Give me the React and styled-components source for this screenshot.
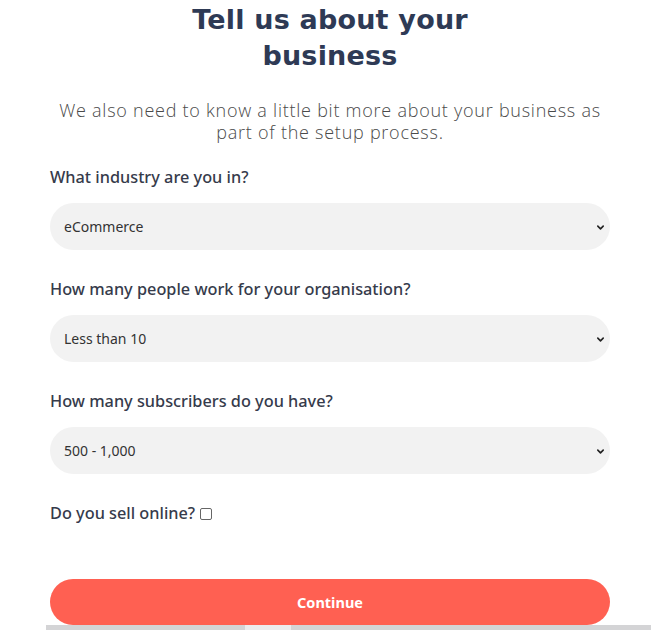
import React from 'react';
import styled, { createGlobalStyle } from 'styled-components';

const Global = createGlobalStyle`
  html, body { margin: 0; padding: 0; background: #fff; }
  body { font-family: "Noto Sans", "Open Sans", sans-serif; }
`;

const Page = styled.main`
  width: 651px;
  height: 630px;
  overflow: hidden;
  display: flex;
  flex-direction: column;
`;

const Form = styled.form`
  width: 560px;
  margin-left: 50px;
  display: flex;
  flex-direction: column;
`;

const Title = styled.h1`
  margin: 2px auto 0;
  width: 320px;
  text-align: center;
  font-family: "DejaVu Sans", sans-serif;
  font-weight: 700;
  font-size: 27px;
  line-height: 36px;
  letter-spacing: 0.2px;
  color: #2e3a55;
`;

const Lead = styled.p`
  margin: 25px -10px 0;
  text-align: center;
  font-family: "Open Sans", sans-serif;
  font-weight: 300;
  font-size: 18px;
  line-height: 22px;
  letter-spacing: 0.75px;
  color: #4a4a4a;
`;

const Field = styled.div`
  display: flex;
  flex-direction: column;
  margin-top: ${p => p.$top || 0}px;
`;

const Label = styled.label`
  font-size: 16.3px;
  font-weight: 500;
  color: #363b4b;
  line-height: 22px;
  display: flex;
  align-items: center;
  gap: 5px;
`;

const SelectWrap = styled.div`
  position: relative;
  margin-top: 15px;
`;

const Select = styled.select`
  appearance: none;
  width: 100%;
  height: 47px;
  border: none;
  border-radius: 24px;
  background: #f2f2f2;
  padding: 0 14px;
  font-family: "Noto Sans", sans-serif;
  font-size: 14px;
  color: #333;
  outline: none;
`;

const Caret = styled.svg`
  position: absolute;
  right: 5px;
  top: 50%;
  margin-top: -4px;
  width: 9px;
  height: 9px;
  pointer-events: none;
`;

const Box = styled.span`
  width: 12px;
  height: 12px;
  border: 1px solid #666;
  border-radius: 2px;
  background: #fff;
  box-sizing: border-box;
  margin-top: 1px;
`;

const Button = styled.button`
  margin-top: 55px;
  height: 46px;
  border: none;
  border-radius: 23px;
  background: #ff6052;
  color: #fff;
  font-family: "Noto Sans", sans-serif;
  font-weight: 700;
  font-size: 14.5px;
  cursor: pointer;
`;

const Scroll = styled.div`
  margin-top: auto;
  height: 5px;
  margin-left: 46px;
  background: #d4d4d6;
  display: flex;
  padding-left: 199px;
  & span { width: 46px; background: #ececee; }
`;

const fields = [
  { label: 'What industry are you in?', value: 'eCommerce', top: 23 },
  { label: 'How many people work for your organisation?', value: 'Less than 10', top: 28 },
  { label: 'How many subscribers do you have?', value: '500 - 1,000', top: 28 },
];

export default function App() {
  return (
    <Page>
      <Global />
      <Form onSubmit={e => e.preventDefault()}>
        <Title>Tell us about your business</Title>
        <Lead>We also need to know a little bit more about your business as part of the setup process.</Lead>
        {fields.map((f, i) => (
          <Field key={i} $top={f.top}>
            <Label>{f.label}</Label>
            <SelectWrap>
              <Select defaultValue={f.value}>
                <option>{f.value}</option>
              </Select>
              <Caret viewBox="0 0 10 10">
                <path d="M2 3.5 L5 6.5 L8 3.5" fill="none" stroke="#222" strokeWidth="1.8" strokeLinecap="round" strokeLinejoin="round" />
              </Caret>
            </SelectWrap>
          </Field>
        ))}
        <Field $top={28}>
          <Label>Do you sell online? <Box /></Label>
        </Field>
        <Button type="submit">Continue</Button>
      </Form>
      <Scroll><span /></Scroll>
    </Page>
  );
}
